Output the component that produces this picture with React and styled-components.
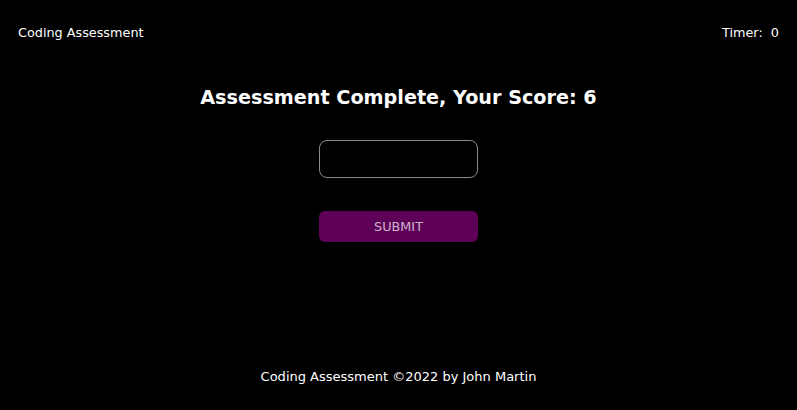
import React from 'react';
import styled, { createGlobalStyle } from 'styled-components';

const GlobalStyle = createGlobalStyle`
  html, body {
    margin: 0;
    padding: 0;
    background: #000;
  }
  body {
    font-family: 'DejaVu Sans', Verdana, sans-serif;
    color: #fff;
  }
`;

const Page = styled.div`
  display: flex;
  flex-direction: column;
  height: 100vh;
  background: #000;
`;

const Header = styled.header`
  display: flex;
  justify-content: space-between;
  align-items: center;
  padding: 24px 18px 0 18px;
  height: 17px;
  font-size: 12.8px;
`;

const Timer = styled.div`
  white-space: pre;
`;

const Main = styled.main`
  flex: 1;
  display: flex;
  flex-direction: column;
  align-items: center;
  padding-top: 45px;
`;

const Title = styled.h1`
  margin: 0;
  font-size: 19.2px;
  font-weight: bold;
`;

const Initials = styled.input`
  box-sizing: border-box;
  margin-top: 31px;
  width: 159px;
  height: 38px;
  border: 1px solid #8a8a8a;
  border-radius: 8px;
  background: #000;
  color: #fff;
  outline: none;
  padding: 0 10px;
  font-family: inherit;
  font-size: 13px;
`;

const SubmitButton = styled.button`
  margin-top: 33px;
  width: 159px;
  height: 31px;
  border: none;
  border-radius: 6px;
  background: #5f0058;
  color: #c9b6c8;
  font-family: inherit;
  font-size: 12.8px;
  cursor: pointer;
`;

const Footer = styled.footer`
  text-align: center;
  font-size: 13px;
  padding-bottom: 26px;
`;

const App = () => {
  return (
    <Page>
      <GlobalStyle />
      <Header>
        <div>Coding Assessment</div>
        <Timer>Timer:  0</Timer>
      </Header>
      <Main>
        <Title>Assessment Complete, Your Score: 6</Title>
        <Initials type="text" />
        <SubmitButton>SUBMIT</SubmitButton>
      </Main>
      <Footer>Coding Assessment ©2022 by John Martin</Footer>
    </Page>
  );
};

export default App;
